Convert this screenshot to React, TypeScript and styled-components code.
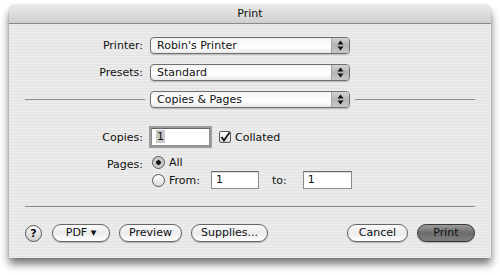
import React from "react";
import styled, { createGlobalStyle } from "styled-components";

const GlobalStyle = createGlobalStyle`
  html, body {
    margin: 0;
    padding: 0;
    background: #fff;
  }
  body {
    font-family: "DejaVu Sans", Verdana, sans-serif;
    font-size: 11px;
    color: #111;
  }
`;

function PopupArrows() {
  return (
    <svg width="7" height="11" viewBox="0 0 7 11">
      <path d="M3.5 0.5 L6.5 4.5 L0.5 4.5 Z" fill="#111" />
      <path d="M3.5 10.5 L6.5 6.5 L0.5 6.5 Z" fill="#111" />
    </svg>
  );
}

function Popup({ label }: { label: string }) {
  return (
    <PopupBox>
      <PopupText>{label}</PopupText>
      <PopupArrow>
        <PopupArrows />
      </PopupArrow>
    </PopupBox>
  );
}

function App() {
  return (
    <Page>
      <GlobalStyle />
      <Window>
        <TitleBar>Print</TitleBar>
        <Body>
          <FormGrid>
            <Label>Printer:</Label>
            <Popup label="Robin's Printer" />
            <Label>Presets:</Label>
            <Popup label="Standard" />
          </FormGrid>

          <SectionRow>
            <Rule />
            <Popup label="Copies & Pages" />
            <Rule />
          </SectionRow>

          <FormGrid>
            <Label>Copies:</Label>
            <Inline>
              <TextField width={59} focused>
                <Selected>1</Selected>
              </TextField>
              <CheckBox>
                <svg width="10" height="10" viewBox="0 0 10 10">
                  <path
                    d="M1.5 5 L4 8.5 L9.5 0.5"
                    stroke="#111"
                    strokeWidth="1.8"
                    fill="none"
                  />
                </svg>
              </CheckBox>
              <span>Collated</span>
            </Inline>

            <Label top>Pages:</Label>
            <PagesCol>
              <Inline>
                <Radio selected />
                <span>All</span>
              </Inline>
              <Inline>
                <Radio />
                <span>From:</span>
                <TextField width={48}>1</TextField>
                <ToLabel>to:</ToLabel>
                <TextField width={49}>1</TextField>
              </Inline>
            </PagesCol>
          </FormGrid>

          <BottomRule />

          <ButtonBar>
            <Group>
              <HelpButton>?</HelpButton>
              <PillButton width={58}>PDF ▾</PillButton>
              <PillButton width={63}>Preview</PillButton>
              <PillButton width={77}>Supplies...</PillButton>
            </Group>
            <Group>
              <PillButton width={61}>Cancel</PillButton>
              <PillButton width={58} primary>
                Print
              </PillButton>
            </Group>
          </ButtonBar>
        </Body>
      </Window>
    </Page>
  );
}

const Page = styled.div`
  width: 500px;
  height: 275px;
  padding-top: 5px;
  box-sizing: border-box;
  background: #fff;
`;

const Window = styled.div`
  margin: 0 9px;
  width: 482px;
  height: 253px;
  border-radius: 6px 6px 0 0;
  background: repeating-linear-gradient(
    to bottom,
    #ebebeb 0px,
    #ebebeb 2px,
    #e3e3e3 2px,
    #e3e3e3 3px
  );
  box-shadow: 0 6px 9px rgba(0, 0, 0, 0.55), 0 0 1px rgba(0, 0, 0, 0.5);
  display: flex;
  flex-direction: column;
  overflow: hidden;
`;

const TitleBar = styled.div`
  height: 18px;
  line-height: 18px;
  text-align: center;
  font-size: 11px;
  background: linear-gradient(to bottom, #e9e9e9, #cfcfcf);
  border-bottom: 1px solid #8a8a8a;
  color: #111;
`;

const Body = styled.div`
  padding: 13px 16px 0 16px;
  display: flex;
  flex-direction: column;
`;

const FormGrid = styled.div`
  display: grid;
  grid-template-columns: 118px auto;
  column-gap: 7px;
  row-gap: 10px;
  align-items: center;
  margin-bottom: 10px;
`;

const Label = styled.div<{ top?: boolean }>`
  text-align: right;
  align-self: ${(p) => (p.top ? "start" : "center")};
  margin-top: ${(p) => (p.top ? "2px" : "0")};
`;

const PopupBox = styled.div`
  width: 198px;
  height: 15px;
  border: 1px solid #6f6f6f;
  border-radius: 4px;
  display: flex;
  background: linear-gradient(to bottom, #f4f4f4, #ffffff 60%, #e8e8e8);
  box-shadow: 0 1px 1px rgba(0, 0, 0, 0.2);
  overflow: hidden;
`;

const PopupText = styled.div`
  flex: 1;
  padding-left: 6px;
  line-height: 15px;
`;

const PopupArrow = styled.div`
  width: 17px;
  border-left: 1px solid #a5a5a5;
  background: linear-gradient(to bottom, #d4d4d4, #b4b4b4 50%, #c8c8c8);
  display: flex;
  align-items: center;
  justify-content: center;
`;

const SectionRow = styled.div`
  display: flex;
  align-items: center;
  gap: 5px;
  margin-bottom: 20px;
  & > div:first-child {
    width: 120px;
    flex: none;
  }
`;

const Rule = styled.div`
  flex: 1;
  height: 1px;
  background: #8c8c8c;
`;

const Inline = styled.div`
  display: flex;
  align-items: center;
  gap: 4px;
`;

const TextField = styled.div<{ width: number; focused?: boolean }>`
  width: ${(p) => p.width - 6}px;
  height: 16px;
  line-height: 16px;
  padding-left: 4px;
  background: #fff;
  border: 1px solid #8a8a8a;
  border-top-color: #666;
  box-shadow: ${(p) =>
    p.focused ? "0 0 0 2px #9b9b9b" : "inset 0 1px 1px rgba(0,0,0,0.15)"};
  margin-left: ${(p) => (p.focused ? "1px" : "7px")};
  margin-right: ${(p) => (p.focused ? "5px" : "0")};
`;

const Selected = styled.span`
  background: #c8c8c8;
  padding: 0 1px;
`;

const CheckBox = styled.div`
  width: 10px;
  height: 10px;
  border: 1px solid #555;
  border-radius: 2px;
  background: linear-gradient(to bottom, #fff, #d8d8d8);
  display: flex;
  align-items: center;
  justify-content: center;
`;

const PagesCol = styled.div`
  display: flex;
  flex-direction: column;
  gap: 2px;
  padding-left: 2px;
`;

const Radio = styled.div<{ selected?: boolean }>`
  width: 11px;
  height: 11px;
  border-radius: 50%;
  border: 1px solid #555;
  background: ${(p) =>
    p.selected
      ? "radial-gradient(circle, #111 0 2px, #bbb 2.5px, #e8e8e8 100%)"
      : "linear-gradient(to bottom, #fff, #dedede)"};
`;

const ToLabel = styled.span`
  margin-left: 9px;
  margin-right: 5px;
`;

const BottomRule = styled.div`
  height: 1px;
  background: #8c8c8c;
  margin-top: 7px;
`;

const ButtonBar = styled.div`
  display: flex;
  justify-content: space-between;
  align-items: center;
  margin-top: 17px;
`;

const Group = styled.div`
  display: flex;
  align-items: center;
  gap: 9px;
`;

const HelpButton = styled.div`
  width: 15px;
  height: 15px;
  border-radius: 50%;
  border: 1px solid #555;
  background: linear-gradient(to bottom, #fafafa, #cfcfcf);
  font-weight: bold;
  font-size: 11px;
  text-align: center;
  line-height: 15px;
  margin-right: 1px;
`;

const PillButton = styled.div<{ width: number; primary?: boolean }>`
  width: ${(p) => p.width - 2}px;
  height: 16px;
  line-height: 16px;
  text-align: center;
  border-radius: 9px;
  border: 1px solid ${(p) => (p.primary ? "#3a3a3a" : "#666")};
  background: ${(p) =>
    p.primary
      ? "linear-gradient(to bottom, #9a9a9a, #6c6c6c 50%, #7e7e7e)"
      : "linear-gradient(to bottom, #fafafa, #ececec 50%, #ffffff)"};
  box-shadow: 0 1px 1px rgba(0, 0, 0, 0.25);
  color: #111;
`;

export default App;
